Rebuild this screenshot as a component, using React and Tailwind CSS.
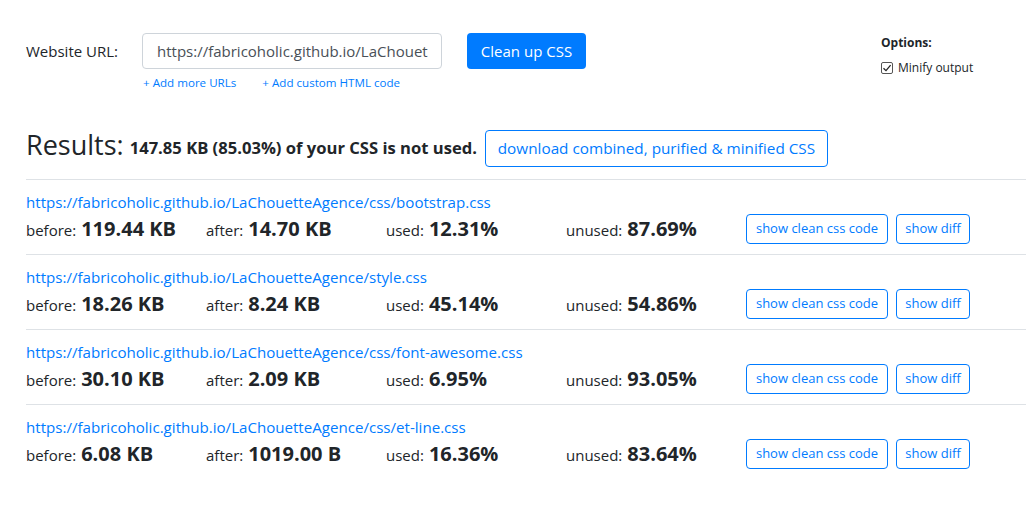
import React from "react";

const rows = [
  { url: "https://fabricoholic.github.io/LaChouetteAgence/css/bootstrap.css", before: "119.44 KB", after: "14.70 KB", used: "12.31%", unused: "87.69%" },
  { url: "https://fabricoholic.github.io/LaChouetteAgence/style.css", before: "18.26 KB", after: "8.24 KB", used: "45.14%", unused: "54.86%" },
  { url: "https://fabricoholic.github.io/LaChouetteAgence/css/font-awesome.css", before: "30.10 KB", after: "2.09 KB", used: "6.95%", unused: "93.05%" },
  { url: "https://fabricoholic.github.io/LaChouetteAgence/css/et-line.css", before: "6.08 KB", after: "1019.00 B", used: "16.36%", unused: "83.64%" },
];

function Stat({ label, value }) {
  return (
    <div className="w-[180px] shrink-0 flex items-baseline whitespace-nowrap">
      <span className="text-[15px]">{label}:</span>
      <span className="ml-[5px] text-[20px] font-bold">{value}</span>
    </div>
  );
}

export default function App() {
  return (
    <div className="w-[1026px] h-[519px] overflow-hidden bg-white text-[#212529] font-['Open_Sans',sans-serif]">
      <div className="relative pl-[26px] pt-[33px]">
        <div className="flex items-start">
          <div className="w-[116px] h-[36px] flex items-center text-[15px]">Website URL:</div>
          <div className="flex flex-col">
            <div className="w-[300px] h-[36px] border border-[#ced4da] rounded-[4px] flex items-center pl-[14px] pr-[10px] overflow-hidden whitespace-nowrap text-[15px] text-[#495057]">
              <span>https://fabricoholic.github.io/LaChouet</span>
            </div>
            <div className="flex text-[11.6px] text-[#007bff] mt-[5px] pl-[1px] leading-[18px] whitespace-nowrap">
              <span>+ Add more URLs</span>
              <span className="ml-[26px]">+ Add custom HTML code</span>
            </div>
          </div>
          <button className="ml-[25px] h-[36px] w-[119px] bg-[#007bff] text-white rounded-[4px] text-[15px]">Clean up CSS</button>
        </div>
        <div className="absolute left-[881px] top-[34px] text-[12px]">
          <div className="font-bold leading-[18px]">Options:</div>
          <div className="flex items-center mt-[8px] leading-[16px]">
            <span className="w-[12px] h-[12px] border border-[#555] rounded-[2px] bg-white flex items-center justify-center mr-[5px]">
              <svg width="10" height="10" viewBox="0 0 10 10"><path d="M1.5 5.2 L4 7.6 L8.6 2.2" fill="none" stroke="#222" strokeWidth="1.3" /></svg>
            </span>
            <span className="text-[12px]">Minify output</span>
          </div>
        </div>

        <div className="flex items-center mt-[38px] h-[37px]">
          <span className="text-[27px] leading-none -mt-[8px]">Results:</span>
          <span className="ml-[6px] text-[16.6px] font-bold whitespace-nowrap">147.85 KB (85.03%) of your CSS is not used.</span>
          <button className="ml-[8px] h-[37px] w-[343px] border border-[#007bff] rounded-[4px] text-[#007bff] text-[15.3px] whitespace-nowrap">download combined, purified &amp; minified CSS</button>
        </div>

        <div className="mt-[12px]">
          {rows.map((r) => (
            <div key={r.url} className="border-t border-[#dee2e6] h-[75px] pt-[11px]">
              <div className="text-[15.1px] leading-[22px] text-[#007bff] whitespace-nowrap">{r.url}</div>
              <div className="flex items-center h-[30px] mt-[1px]">
                <Stat label="before" value={r.before} />
                <Stat label="after" value={r.after} />
                <Stat label="used" value={r.used} />
                <Stat label="unused" value={r.unused} />
                <button className="h-[30px] w-[142px] border border-[#007bff] rounded-[4px] text-[#007bff] text-[13px]">show clean css code</button>
                <button className="ml-[8px] h-[30px] w-[74px] border border-[#007bff] rounded-[4px] text-[#007bff] text-[13px]">show diff</button>
              </div>
            </div>
          ))}
        </div>
      </div>
    </div>
  );
}
